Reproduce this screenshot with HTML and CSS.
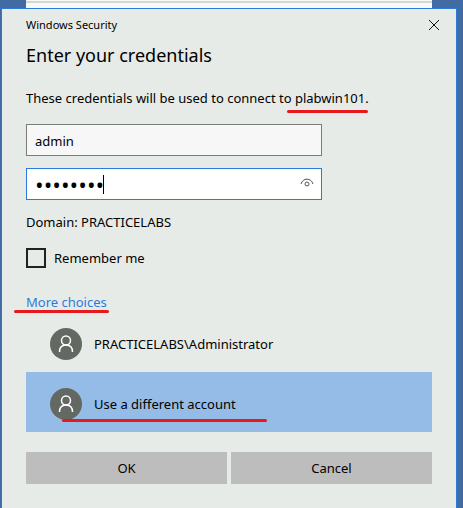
FILE: index.html
```html
<!DOCTYPE html>
<html lang="en">
<head>
<meta charset="utf-8">
<meta name="viewport" content="width=device-width, initial-scale=1">
<title>Windows Security</title>
<link rel="stylesheet" href="styles.css">
</head>
<body>
<div class="backdrop"></div>
<main class="dialog" role="dialog" aria-labelledby="heading">
  <header class="titlebar">
    <span class="caption">Windows Security</span>
    <button class="close" type="button" aria-label="Close">
      <svg width="12" height="12" viewBox="0 0 12 12" aria-hidden="true"><path d="M1 1l10 10M11 1L1 11"/></svg>
    </button>
  </header>
  <form class="form">
    <h1 class="heading" id="heading">Enter your credentials</h1>
    <p class="message">These credentials will be used to connect to <span class="mark mark-host">plabwin101</span>.</p>
    <div class="fields">
      <input class="field" type="text" value="admin" aria-label="User name">
      <div class="password">
        <input class="field field-active" type="password" value="password" aria-label="Password">
        <span class="caret"></span>
        <button class="reveal" type="button" aria-label="Reveal password">
          <svg width="14" height="10" viewBox="0 0 14 10" aria-hidden="true"><path d="M1 6C2 2.800 4.200 1.200 7 1.200S12 2.800 13 6"/><circle cx="7" cy="6" r="2"/></svg>
        </button>
      </div>
    </div>
    <p class="domain">Domain: PRACTICELABS</p>
    <label class="remember"><input class="checkbox" type="checkbox">Remember me</label>
    <a class="more mark mark-more" href="#accounts">More choices</a>
    <div class="accounts" id="accounts">
      <button class="account" type="button">
        <svg class="avatar" width="32" height="32" viewBox="0 0 32 32" aria-hidden="true"><circle class="disc" cx="16" cy="16" r="16"/><circle cx="16" cy="12.500" r="4.500"/><path d="M9.500 24C9.500 19.500 12.200 17 16 17S22.500 19.500 22.500 24"/></svg>
        <span>PRACTICELABS\Administrator</span>
      </button>
      <button class="account account-selected mark mark-account" type="button">
        <svg class="avatar" width="32" height="32" viewBox="0 0 32 32" aria-hidden="true"><circle class="disc" cx="16" cy="16" r="16"/><circle cx="16" cy="12.500" r="4.500"/><path d="M9.500 24C9.500 19.500 12.200 17 16 17S22.500 19.500 22.500 24"/></svg>
        <span>Use a different account</span>
      </button>
    </div>
    <div class="actions">
      <button class="action" type="submit">OK</button>
      <button class="action" type="button">Cancel</button>
    </div>
  </form>
</main>
</body>
</html>
```
FILE: styles.css
```css
* {
  box-sizing: border-box;
}

body {
  display: flex;
  flex-direction: column;
  min-height: 100vh;
  margin: 0;
  padding: 0 6px 0 1px;
  background: #436ba3;
  color: #000;
  font: 13px/20px "Noto Sans", "Open Sans", sans-serif;
}

button,
input {
  margin: 0;
  border: 0;
  border-radius: 0;
  color: inherit;
  font: inherit;
}

button {
  padding: 0;
  background: none;
}

svg {
  display: block;
  fill: none;
  stroke: #111;
}

.backdrop {
  height: 8px;
  margin: 0 25px;
  background: linear-gradient(#f8faf9 1px, #d3d8d5 1px 3px, #f8faf9 3px);
}

.dialog {
  flex: 1;
  padding: 0 24px 24px;
  border: 1px solid #2b7bd9;
  border-bottom: 0;
  background: #e6ebe7;
}

.titlebar {
  display: flex;
  justify-content: space-between;
  align-items: center;
  height: 32px;
  margin-right: -8px;
}

.caption {
  font-size: 11px;
}

.form {
  display: flex;
  flex-direction: column;
}

.heading {
  margin: 0;
  font-size: 18px;
  font-weight: 400;
  line-height: 28px;
}

.message {
  margin: 19px 0 16px;
}

.fields {
  display: grid;
  gap: 12px;
  width: 296px;
}

.field {
  display: block;
  width: 100%;
  height: 32px;
  padding: 2px 8px 0;
  border: 1px solid #7a7c7b;
  background: #f7f7f7;
}

.field-active {
  border-color: #2b7bd9;
  background: #fff;
  font-family: "Open Sans", sans-serif;
  font-size: 23px;
}

.password {
  position: relative;
}

.caret {
  position: absolute;
  top: 7px;
  left: 77px;
  width: 1px;
  height: 19px;
  background: #000;
}

.reveal {
  position: absolute;
  top: 10px;
  right: 8px;
}

.reveal svg {
  stroke: #555;
}

.domain {
  margin: 12px 0 16px;
}

.remember {
  display: flex;
  align-items: center;
  gap: 8px;
}

.checkbox {
  width: 20px;
  height: 20px;
  border: 2px solid #222;
  appearance: none;
}

.more {
  align-self: flex-start;
  margin-top: 24px;
  color: #2b7bd9;
  text-decoration: none;
}

.mark {
  position: relative;
}

.mark::after {
  position: absolute;
  height: 3px;
  border-radius: 2px;
  background: #e8191d;
  content: "";
}

.mark-host::after {
  right: -3px;
  bottom: -6px;
  left: -8px;
}

.mark-more::after {
  right: -2px;
  bottom: -1px;
  left: -12px;
}

.mark-account::after {
  bottom: 10px;
  left: 36px;
  width: 205px;
}

.account {
  display: flex;
  align-items: center;
  gap: 12px;
  width: 100%;
  height: 60px;
  padding: 4px 24px 0;
  text-align: left;
}

.account-selected {
  background: #94bce7;
}

.avatar {
  stroke: #fff;
  stroke-width: 1.5;
}

.disc {
  fill: #636863;
  stroke: none;
}

.actions {
  display: grid;
  grid-template-columns: 1fr 1fr;
  gap: 4px;
  margin-top: 20px;
}

.action {
  height: 32px;
  background: #bdbdbd;
}
```
